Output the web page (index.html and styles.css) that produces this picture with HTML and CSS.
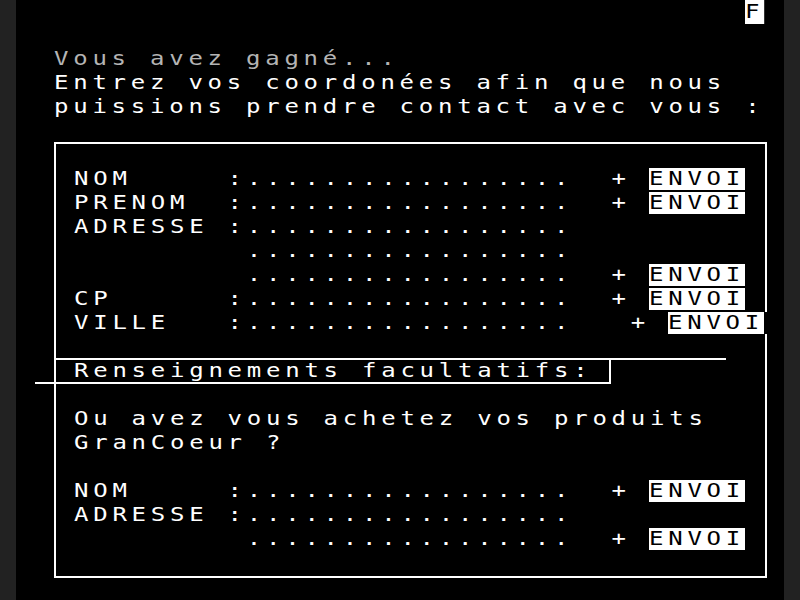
FILE: index.html
```html
<!DOCTYPE html>
<html lang="fr">
<head>
<meta charset="utf-8">
<title>Minitel - Vous avez gagné</title>
<link rel="stylesheet" href="styles.css">
</head>
<body>
<div class="screen">
  <div class="frame"></div>

  <div class="t inv status r0 c38">F</div>

  <div class="t dim r2 c2">Vous avez gagné...</div>
  <div class="t r3 c2">Entrez vos coordonées afin que nous</div>
  <div class="t r4 c2">puissions prendre contact avec vous :</div>

  <div class="t r7 c3">NOM     :.................  +</div>
  <div class="t inv r7 c33">ENVOI</div>
  <div class="t r8 c3">PRENOM  :.................  +</div>
  <div class="t inv r8 c33">ENVOI</div>
  <div class="t r9 c3">ADRESSE :.................</div>
  <div class="t r10 c3">         .................</div>
  <div class="t r11 c3">         .................  +</div>
  <div class="t inv r11 c33">ENVOI</div>
  <div class="t r12 c3">CP      :.................  +</div>
  <div class="t inv r12 c33">ENVOI</div>
  <div class="t r13 c3">VILLE   :.................   +</div>
  <div class="t inv cover r13 c34">ENVOI</div>

  <div class="hline"></div>
  <div class="label"><span class="t">Renseignements facultatifs:</span></div>

  <div class="t r17 c3">Ou avez vous achetez vos produits</div>
  <div class="t r18 c3">GranCoeur ?</div>

  <div class="t r20 c3">NOM     :.................  +</div>
  <div class="t inv r20 c33">ENVOI</div>
  <div class="t r21 c3">ADRESSE :.................</div>
  <div class="t r22 c3">         .................  +</div>
  <div class="t inv r22 c33">ENVOI</div>
</div>
</body>
</html>
```

FILE: styles.css
```css
html, body {
  margin: 0;
  padding: 0;
  overflow: hidden;
  background: #222222;
}

body {
  display: flex;
  justify-content: center;
}

.screen {
  width: 768px;
  height: 600px;
  background: #000;
  display: grid;
  grid-template-columns: repeat(40, 19.2px);
  grid-template-rows: repeat(25, 24px);
}

/* one character cell = 19.2px; glyphs drawn at 16px advance and stretched */
.t {
  justify-self: start;
  align-self: start;
  white-space: pre;
  font-family: "DejaVu Sans Mono", "Liberation Mono", monospace;
  font-size: 20px;
  line-height: 20px;
  letter-spacing: 3.959px;
  color: #fff;
  transform: scaleX(1.2);
  transform-origin: 0 0;
}

.dim { color: #b4b4b4; }

.inv {
  background: #fff;
  color: #000;
  height: 22px;
}

.status {
  height: 24px;
  line-height: 23px;
}

.cover {
  box-shadow: 3px 0 0 #000;
  z-index: 1;
}

/* outer frame */
.frame {
  grid-row: 6 / 25;
  grid-column: 3 / 41;
  margin: 21.6px 16.8px -2.4px 0;
  border: 2.4px solid #fff;
}

.hline {
  grid-row: 15;
  grid-column: 3 / 38;
  align-self: end;
  border-bottom: 2.4px solid #fff;
}

.label {
  grid-row: 16;
  grid-column: 2 / 32;
  border-right: 2.4px solid #fff;
  border-bottom: 2.4px solid #fff;
}

.label .t {
  display: inline-block;
  margin-left: 38.4px;
}

/* rows */
.r0 { grid-row: 1; }
.r2 { grid-row: 3; }
.r3 { grid-row: 4; }
.r4 { grid-row: 5; }
.r7 { grid-row: 8; }
.r8 { grid-row: 9; }
.r9 { grid-row: 10; }
.r10 { grid-row: 11; }
.r11 { grid-row: 12; }
.r12 { grid-row: 13; }
.r13 { grid-row: 14; }
.r17 { grid-row: 18; }
.r18 { grid-row: 19; }
.r20 { grid-row: 21; }
.r21 { grid-row: 22; }
.r22 { grid-row: 23; }

/* columns */
.c2 { grid-column: 3 / 41; }
.c3 { grid-column: 4 / 41; }
.c33 { grid-column: 34 / 39; }
.c34 { grid-column: 35 / 40; }
.c38 { grid-column: 39 / 40; }
```
